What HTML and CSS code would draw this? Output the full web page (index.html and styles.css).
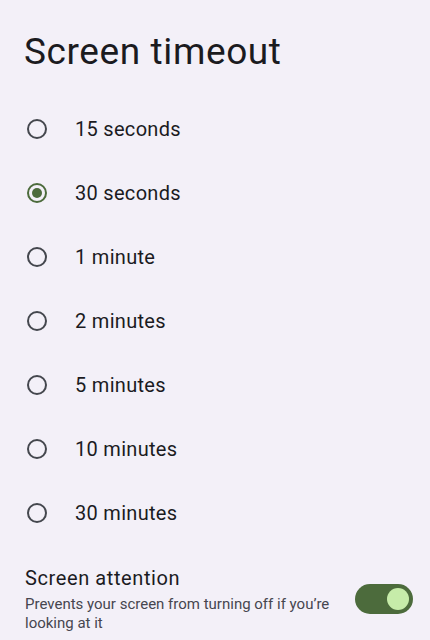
FILE: index.html
```html
<!DOCTYPE html>
<html lang="en">
<head>
  <meta charset="UTF-8" />
  <meta name="viewport" content="width=device-width, initial-scale=1.0"/>
  <title>Screen timeout</title>
  <link rel="stylesheet" href="styles.css">
</head>
<body>

  <h1>Screen timeout</h1>

  <!-- Timeout options -->
  <div class="options">
    <div class="option"><span class="radio"></span><span class="label">15 seconds</span></div>
    <div class="option"><span class="radio checked"></span><span class="label">30 seconds</span></div>
    <div class="option"><span class="radio"></span><span class="label">1 minute</span></div>
    <div class="option"><span class="radio"></span><span class="label">2 minutes</span></div>
    <div class="option"><span class="radio"></span><span class="label">5 minutes</span></div>
    <div class="option"><span class="radio"></span><span class="label">10 minutes</span></div>
    <div class="option"><span class="radio"></span><span class="label">30 minutes</span></div>
  </div>

  <!-- Screen attention -->
  <div class="setting">
    <div class="setting-text">
      <div class="setting-title">Screen attention</div>
      <div class="setting-sub">Prevents your screen from turning off if you’re looking at it</div>
    </div>
    <div class="switch"><span class="thumb"></span></div>
  </div>

</body>
</html>
```

FILE: styles.css
```css
* { margin: 0; padding: 0; box-sizing: border-box; }
body {
  font-family: Roboto, "Noto Sans", sans-serif;
  background: #f3f0f8;
  color: #1b1b1f;
  width: 430px;
  height: 640px;
  overflow: hidden;
}
h1 {
  font-weight: 400;
  font-size: 37px;
  line-height: 44px;
  padding: 30px 0 0 24px;
  height: 97px;
  letter-spacing: 0.6px;
}
.option {
  display: flex;
  align-items: center;
  height: 64px;
  padding-left: 27px;
}
.radio {
  width: 20px;
  height: 20px;
  border: 2px solid #44474e;
  border-radius: 50%;
  margin-right: 28px;
  display: flex;
  align-items: center;
  justify-content: center;
}
.radio.checked { border-color: #4c6b3c; }
.radio.checked::after {
  content: "";
  width: 10px;
  height: 10px;
  border-radius: 50%;
  background: #4c6b3c;
}
.label {
  font-size: 20px;
  letter-spacing: 0.3px;
  color: #1b1b1f;
}
.setting {
  display: flex;
  align-items: center;
  padding: 20px 17px 0 25px;
}
.setting-text { flex: 1; }
.setting-title {
  font-size: 20px;
  line-height: 26px;
  letter-spacing: 0.6px;
}
.setting-sub {
  font-size: 15px;
  line-height: 19px;
  color: #46464f;
  margin-top: 4px;
  max-width: 320px;
}
.switch {
  width: 58px;
  height: 30px;
  border-radius: 15px;
  background: #4c6b3c;
  display: flex;
  align-items: center;
  justify-content: flex-end;
  padding-right: 4px;
  margin-top: 0;
}
.thumb {
  width: 22px;
  height: 22px;
  border-radius: 50%;
  background: #c6eca9;
}
```
